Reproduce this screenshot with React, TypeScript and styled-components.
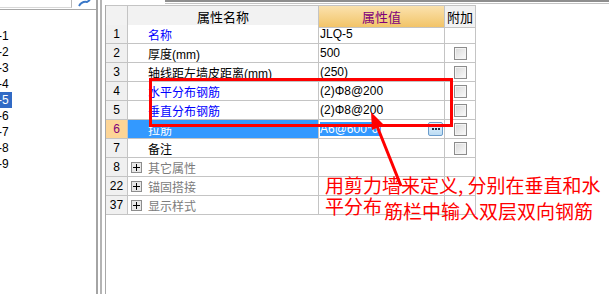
import { FC } from "react";
import styled, { createGlobalStyle } from "styled-components";

const GlobalStyle = createGlobalStyle`
  html, body {
    margin: 0;
    padding: 0;
    background: #fff;
  }
  body {
    font-family: "Liberation Sans", "Noto Sans CJK SC", sans-serif;
    font-size: 12px;
    color: #000;
  }
`;

type Tone = "link" | "plain" | "group" | "selected";

interface PropRow {
  no: string;
  name: string;
  tone: Tone;
  value?: string;
  check?: boolean;
}

const rows: PropRow[] = [
  { no: "1", name: "名称", tone: "link", value: "JLQ-5" },
  { no: "2", name: "厚度(mm)", tone: "plain", value: "500", check: true },
  { no: "3", name: "轴线距左墙皮距离(mm)", tone: "plain", value: "(250)", check: true },
  { no: "4", name: "水平分布钢筋", tone: "link", value: "(2)Φ8@200", check: true },
  { no: "5", name: "垂直分布钢筋", tone: "link", value: "(2)Φ8@200", check: true },
  { no: "6", name: "拉筋", tone: "selected", value: "A6@600*600", check: true },
  { no: "7", name: "备注", tone: "plain", value: "", check: true },
  { no: "8", name: "其它属性", tone: "group" },
  { no: "22", name: "锚固搭接", tone: "group" },
  { no: "37", name: "显示样式", tone: "group" },
];

const walls = ["JLQ-1", "JLQ-2", "JLQ-3", "JLQ-4", "JLQ-5", "JLQ-6", "JLQ-7", "JLQ-8", "JLQ-9"];

const Page = styled.div`
  position: relative;
  width: 609px;
  height: 294px;
  display: flex;
  overflow: hidden;
  background: #fff;
`;

const LeftPanel = styled.div`
  width: 98px;
  flex-shrink: 0;
  box-sizing: border-box;
  border-right: 2px solid #a4a4a4;
  overflow: hidden;
`;

const SearchBar = styled.div`
  height: 9px;
  display: flex;
  align-items: flex-start;
  gap: 6px;
  border-bottom: 1px solid #a8a8a8;
`;

const SearchInput = styled.div`
  width: 72px;
  height: 8px;
  box-sizing: border-box;
  border-right: 1px solid #b8b8b8;
  border-bottom: 1px solid #d8d8d8;
`;

const WallList = styled.ul`
  list-style: none;
  margin: 18px 0 0 -24px;
  padding: 0;
`;

const WallItem = styled.li`
  height: 16px;
  line-height: 16px;
  white-space: nowrap;
`;

const WallLabel = styled.span<{ $active?: boolean }>`
  display: inline-block;
  padding: 0 3px 0 0;
  background: ${(p) => (p.$active ? "#316ac5" : "transparent")};
  color: ${(p) => (p.$active ? "#fff" : "#000")};
  font-size: 12px;
`;

const RightArea = styled.div`
  flex: 1;
  margin-left: 2px;
  border-left: 2px solid #b4b4b4;
  display: flex;
  flex-direction: column;
`;

const TopStrip = styled.div`
  height: 5px;
  flex-shrink: 0;
`;

const TopRule = styled.div`
  margin-left: 63px;
  height: 1px;
  border-top: 2px solid #8e8e8e;
  border-bottom: 1px solid #c4c4c4;
`;

const GridWrap = styled.div`
  flex: 1;
  margin-left: 3px;
  border-left: 1px solid #a8a8a8;
`;

const Table = styled.div`
  display: grid;
  grid-template-columns: 22px 191px 126px 31px;
  grid-auto-rows: 19px;
  border-top: 1px solid #c4c4c4;
  width: max-content;
`;

const HeadCell = styled.div<{ $accent?: boolean }>`
  height: 22px;
  box-sizing: border-box;
  border-right: 1px solid #c4c4c4;
  border-bottom: 1px solid #c4c4c4;
  background: ${(p) =>
    p.$accent ? "linear-gradient(#fbe2ae, #f2c468)" : "#f2f2f2"};
  color: ${(p) => (p.$accent ? "#80007a" : "#000")};
  font-size: 13px;
  display: flex;
  align-items: center;
  justify-content: center;
`;

const Cell = styled.div`
  box-sizing: border-box;
  border-right: 1px solid #c4c4c4;
  border-bottom: 1px solid #c4c4c4;
  display: flex;
  align-items: center;
  white-space: nowrap;
  overflow: hidden;
`;

const NumCell = styled(Cell)<{ $active?: boolean }>`
  justify-content: center;
  background: ${(p) => (p.$active ? "#fdd596" : "#f0f0f0")};
  color: ${(p) => (p.$active ? "#80007a" : "#000")};
`;

const toneColor: Record<Tone, string> = {
  link: "#0000ff",
  plain: "#000",
  group: "#7c7c7c",
  selected: "#fff",
};

const NameCell = styled(Cell)<{ $tone: Tone }>`
  padding-left: ${(p) => (p.$tone === "group" ? "3px" : "20px")};
  gap: 6px;
  background: ${(p) => (p.$tone === "selected" ? "#3399ff" : "#fff")};
  color: ${(p) => toneColor[p.$tone]};
`;

const ValueCell = styled(Cell)`
  padding-left: 1px;
  justify-content: space-between;
`;

const SelectedValue = styled.span`
  max-width: 61px;
  overflow: hidden;
  background: #3399ff;
  color: #fff;
  line-height: 14px;
`;

const MoreButton = styled.div`
  width: 15px;
  height: 14px;
  margin-right: 1px;
  box-sizing: border-box;
  border: 1px solid #6a9ccc;
  border-radius: 2px;
  background: linear-gradient(#e6f3fc, #bcdcf4);
  display: flex;
  align-items: center;
  justify-content: center;
  gap: 1px;
`;

const Dot = styled.i`
  width: 2px;
  height: 2px;
  background: #1a2a44;
`;

const CheckCell = styled(Cell)`
  justify-content: center;
`;

const CheckBox = styled.div`
  width: 13px;
  height: 13px;
  box-sizing: border-box;
  border: 1px solid #8c8c8c;
  box-shadow: inset 0 0 0 1px #f4f4f4;
  background: linear-gradient(135deg, #d8d8d8, #fbfbfb);
`;

const PlusBox = styled.div`
  width: 11px;
  height: 11px;
  box-sizing: border-box;
  border: 1px solid #8c8c8c;
  background: #e8e8e8;
  position: relative;
  &::before,
  &::after {
    content: "";
    position: absolute;
    background: #000;
  }
  &::before {
    left: 1px;
    right: 1px;
    top: 4px;
    height: 1px;
  }
  &::after {
    top: 1px;
    bottom: 1px;
    left: 4px;
    width: 1px;
  }
`;

const Highlight = styled.div`
  position: absolute;
  left: 149px;
  top: 78px;
  width: 304px;
  height: 49px;
  box-sizing: border-box;
  border: 3px solid #ff0000;
  pointer-events: none;
`;

const Arrow = styled.svg`
  position: absolute;
  left: 0;
  top: 0;
  pointer-events: none;
`;

const Note = styled.div`
  position: absolute;
  left: 325px;
  top: 174px;
  color: #ff0000;
  font-family: "Noto Sans CJK SC", sans-serif;
  font-size: 19px;
  line-height: 21px;
  white-space: nowrap;
`;

const NoteLine = styled.div`
  display: flex;
`;

const NoteTail = styled.span`
  position: relative;
  top: 5px;
  margin-left: 2px;
`;

const PropertyGrid: FC = () => (
  <Table>
    <HeadCell />
    <HeadCell>属性名称</HeadCell>
    <HeadCell $accent>属性值</HeadCell>
    <HeadCell>附加</HeadCell>
    {rows.map((r) => (
      <Row key={r.no} row={r} />
    ))}
  </Table>
);

const Row: FC<{ row: PropRow }> = ({ row }) => {
  const selected = row.tone === "selected";
  return (
    <>
      <NumCell $active={selected}>{row.no}</NumCell>
      <NameCell $tone={row.tone}>
        {row.tone === "group" && <PlusBox />}
        {row.name}
      </NameCell>
      <ValueCell>
        {selected ? (
          <>
            <SelectedValue>{row.value}</SelectedValue>
            <MoreButton>
              <Dot />
              <Dot />
              <Dot />
            </MoreButton>
          </>
        ) : (
          row.value
        )}
      </ValueCell>
      <CheckCell>{row.check && <CheckBox />}</CheckCell>
    </>
  );
};

export default function App() {
  return (
    <>
      <GlobalStyle />
      <Page>
        <LeftPanel>
          <SearchBar>
            <SearchInput />
            <svg width="13" height="7" viewBox="0 0 13 7">
              <path d="M1 6 Q4 1 9 2 L12 0" stroke="#3a78c8" strokeWidth="2" fill="none" />
            </svg>
          </SearchBar>
          <WallList>
            {walls.map((w, i) => (
              <WallItem key={w}>
                <WallLabel $active={i === 4}>{w}</WallLabel>
              </WallItem>
            ))}
          </WallList>
        </LeftPanel>
        <RightArea>
          <TopStrip>
            <TopRule />
          </TopStrip>
          <GridWrap>
            <PropertyGrid />
          </GridWrap>
        </RightArea>

        <Highlight />
        <Arrow width="609" height="294" viewBox="0 0 609 294">
          <line x1="401" y1="186" x2="377" y2="126" stroke="#ff0000" strokeWidth="3" />
          <polygon points="371,112 384,125 372,130" fill="#ff0000" />
        </Arrow>
        <Note>
          <div>用剪力墙来定义, 分别在垂直和水</div>
          <NoteLine>
            <span>平分布</span>
            <NoteTail>筋栏中输入双层双向钢筋</NoteTail>
          </NoteLine>
        </Note>
      </Page>
    </>
  );
}
